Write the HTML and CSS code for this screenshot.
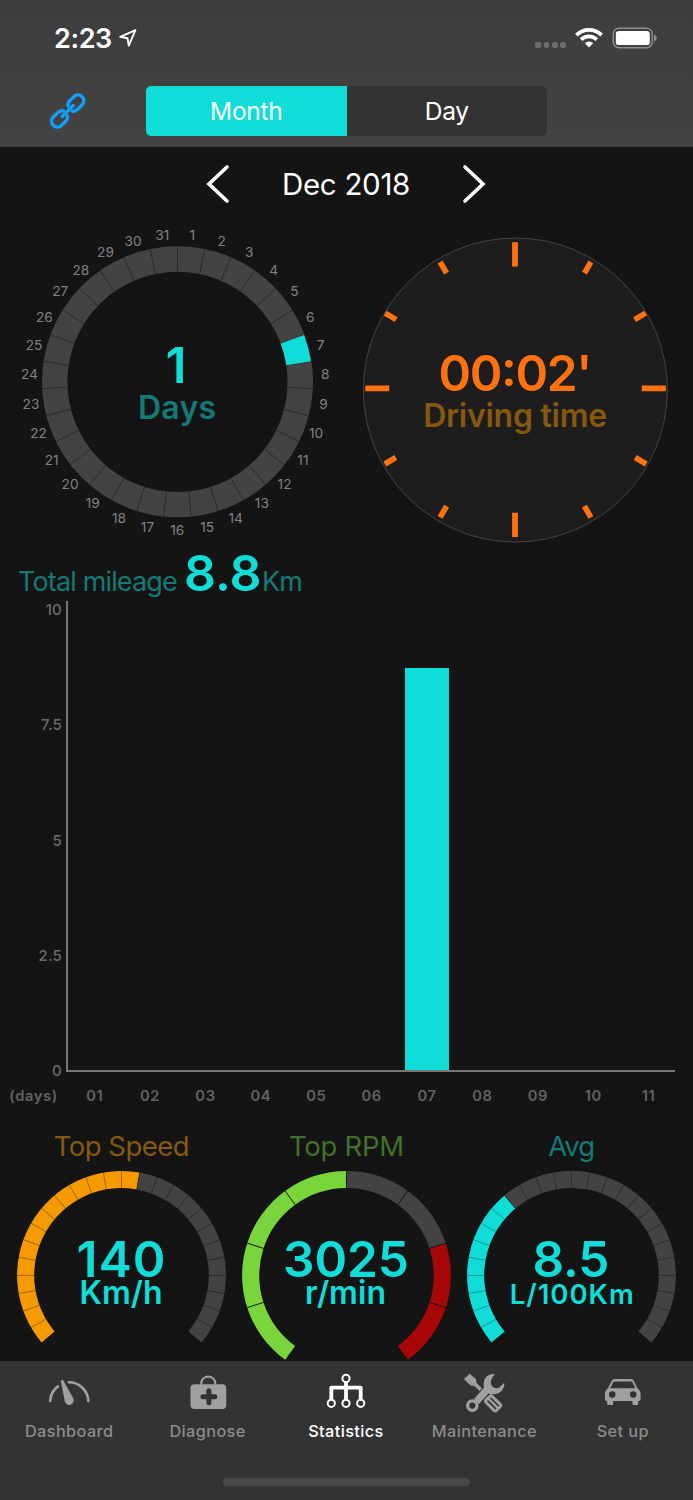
FILE: index.html
```html
<!DOCTYPE html>
<html lang="en">
<head>
  <meta charset="UTF-8">
  <meta name="viewport" content="width=device-width, initial-scale=1.0">
  <title>Statistics</title>
  <link rel="stylesheet" href="styles.css">
</head>
<body>

  <div class="header">
    <div class="status-bar">
      <div class="clock">
        <span class="time">2:23</span>
        <svg width="20" height="20" viewBox="0 0 20 20"><path d="M17.4 2.2 L2.2 8.8 L9.5 10.3 L10.8 17.6 Z" fill="none" stroke="#fff" stroke-width="1.9" stroke-linejoin="round"/></svg>
      </div>
      <div class="status-icons">
        <div class="signal"><i></i><i></i><i></i><i></i></div>
        <svg class="wifi" width="28" height="20" viewBox="0 0 28 20" fill="none" stroke="#fff">
          <path d="M1.4 7.1 A17.8 17.8 0 0 1 26.6 7.1" stroke-width="3.7"/>
          <path d="M6.1 11.6 A11.2 11.2 0 0 1 21.9 11.6" stroke-width="3.7"/>
          <path d="M14 19.4 L9.8 15.3 A6 6 0 0 1 18.2 15.3 Z" fill="#fff" stroke="none"/>
        </svg>
        <svg width="46" height="22" viewBox="0 0 46 22">
          <rect x="1.3" y="1.3" width="39" height="19.4" rx="5.6" fill="none" stroke="#8c8c8c" stroke-width="1.5"/>
          <rect x="3.8" y="3.9" width="34" height="14.2" rx="3.2" fill="#fff"/>
          <path d="M42 7.6 Q44.8 8.6 44.8 11 T42 14.4 Z" fill="#8c8c8c"/>
        </svg>
      </div>
    </div>
    <div class="toolbar">
      <svg class="link-icon" width="36" height="36" viewBox="0 0 36 36" fill="none" stroke="#13a0f7" stroke-width="3.4" stroke-linecap="round">
        <path id="chain" d="M18 13 Q17.4 10.2 19.8 7.8 L24 3.6 A5.8 5.8 0 0 1 32.2 11.8 L27.4 16.6 Q25 18.8 22.2 18.1"/>
        <use href="#chain" transform="rotate(180 17.7 18)"/>
        <path d="M12.2 23.5 L23.2 12.5"/>
      </svg>
      <div class="segment">
        <div class="segment-btn active">Month</div>
        <div class="segment-btn">Day</div>
      </div>
    </div>
  </div>

  <div class="month-nav">
    <svg width="24" height="40" viewBox="0 0 24 40"><path d="M21 3 L3 20 L21 37"/></svg>
    <span class="month-name">Dec 2018</span>
    <svg width="24" height="40" viewBox="0 0 24 40"><path d="M3 3 L21 20 L3 37"/></svg>
  </div>

  <div class="dials">
    <svg id="daysRing" width="355" height="329" viewBox="0 0 355 329">
      <g id="daysSegments"></g>
      <text class="big cyan" x="176" y="162">1</text>
      <text class="medium teal" x="177" y="197.7" textLength="78">Days</text>
    </svg>
    <svg width="338" height="329" viewBox="0 0 338 329">
      <circle cx="160.4" cy="169" r="152" fill="#1d1d1d" stroke="#444" stroke-width="1"/>
      <g stroke="#ff720f">
        <path d="M160 21.3 V45.5 M160 291.7 V316 M10.3 167.4 H34.2 M286.8 167.4 H310.8" stroke-width="5.8"/>
        <path d="M235.9 41 L229.4 52.2 M290.6 92.2 L279.6 98.7 M291.2 243 L280.2 236.5 M235.9 296.3 L229.4 285.1 M85.1 296.3 L91.6 285.1 M29.8 243 L40.8 236.5 M30.2 92.2 L41.2 98.7 M85.1 41 L91.6 52.2" stroke-width="5.6"/>
      </g>
      <text class="big orange" x="160.4" y="170" textLength="154">00:02'</text>
      <text class="medium brown" x="160.2" y="205.5" textLength="184">Driving time</text>
    </svg>
  </div>

  <div class="mileage">
    <span class="mileage-label">Total mileage</span>
    <span class="mileage-value">8.8</span>
    <span class="mileage-unit">Km</span>
  </div>

  <div class="chart">
    <div class="y-axis">
      <span>10</span><span>7.5</span><span>5</span><span>2.5</span><span>0</span>
    </div>
    <div class="plot">
      <div class="bar"></div>
    </div>
  </div>
  <div class="x-axis">
    <span class="x-unit">(days)</span>
    <span>01</span><span>02</span><span>03</span><span>04</span><span>05</span><span>06</span><span>07</span><span>08</span><span>09</span><span>10</span><span>11</span>
  </div>

  <div class="gauges">
    <svg id="speedGauge" width="225.4" height="241" viewBox="0 0 225.4 241">
      <g></g>
      <text class="title brown" x="112.7" y="36" textLength="136">Top Speed</text>
      <text class="big cyan" x="112" y="156.7" textLength="89">140</text>
      <text class="medium cyan" x="112" y="184" textLength="83">Km/h</text>
    </svg>
    <svg id="rpmGauge" width="225.4" height="241" viewBox="0 0 225.4 241">
      <g></g>
      <text class="title green" x="112.5" y="36" textLength="115">Top RPM</text>
      <text class="big cyan" x="112" y="156.7" textLength="126">3025</text>
      <text class="medium cyan" x="111.6" y="184" textLength="81">r/min</text>
    </svg>
    <svg id="avgGauge" width="225.4" height="241" viewBox="0 0 225.4 241">
      <g></g>
      <text class="title teal" x="112.7" y="36" textLength="47">Avg</text>
      <text class="big cyan" x="112" y="156.7" textLength="77">8.5</text>
      <text class="small cyan" x="112.7" y="183.7" textLength="124">L/100Km</text>
    </svg>
  </div>

  <div class="tab-bar">
    <div class="tabs">
      <div class="tab">
        <svg width="48" height="46" viewBox="0 0 48 46">
          <path d="M5.2 31 A19 19 0 0 1 13 16.4 M23.9 12.3 A19.4 19.4 0 0 1 43.3 31" fill="none" stroke="#a0a0a0" stroke-width="2.6" stroke-linecap="round"/>
          <path d="M15.9 11.2 Q16.2 9.2 18.2 10.3 L28.2 28.3 A4.5 4.5 0 1 1 19.8 31.2 Z" fill="#a0a0a0"/>
        </svg>
        <span>Dashboard</span>
      </div>
      <div class="tab">
        <svg width="48" height="46" viewBox="0 0 48 46">
          <path d="M17.3 14.5 V12.5 A7 6.6 0 0 1 31.2 12.5 V14.5" fill="none" stroke="#a0a0a0" stroke-width="2.2"/>
          <rect x="6.5" y="14.3" width="35.8" height="24.6" rx="4" fill="#a0a0a0"/>
          <path d="M18.9 26.8 H30.9 M24.9 20.8 V32.8" stroke="#333" stroke-width="5" stroke-linecap="round"/>
        </svg>
        <span>Diagnose</span>
      </div>
      <div class="tab active">
        <svg width="48" height="46" viewBox="0 0 48 46" fill="none" stroke="#fff">
          <path d="M24 12 V29.6 M9.3 29.6 V17.7 H38.7 V29.6" stroke-width="3.8" stroke-linejoin="round"/>
          <g stroke-width="2" fill="#333">
            <circle cx="24" cy="8.4" r="3.6"/>
            <circle cx="9.3" cy="33.3" r="3.6"/>
            <circle cx="24" cy="33.3" r="3.6"/>
            <circle cx="38.7" cy="33.3" r="3.6"/>
          </g>
        </svg>
        <span>Statistics</span>
      </div>
      <div class="tab">
        <svg width="48" height="46" viewBox="0 0 48 46" fill="#a0a0a0">
          <path d="M3.9 9 L9.6 3.7 L16 9 L16.6 13 L21.9 18.3 L19.6 21 L14.3 16 L10.3 15.3 Z"/>
          <path d="M35 4 C27 3.5 22.5 8.5 24 17.5 L14 29 L19 34 L28.5 23.5 C37 26.5 45 21 44.3 12.8 L39.5 17.3 C36 19.5 30.8 17.5 30.8 12 Q31 8.5 35 4 Z"/>
          <circle cx="12.3" cy="35.6" r="4.7" fill="#333" stroke="#a0a0a0" stroke-width="3.2"/>
          <g transform="translate(33 33.2) rotate(45)">
            <rect x="-8.6" y="-5.8" width="17.6" height="11.6" rx="3.4"/>
            <path d="M-5 -2 H5.6 M-5 2 H5.6" stroke="#333" stroke-width="1.6" stroke-linecap="round"/>
          </g>
        </svg>
        <span>Maintenance</span>
      </div>
      <div class="tab">
        <svg width="48" height="46" viewBox="0 0 48 46" fill="#a0a0a0">
          <path d="M12.8 10.5 Q13.8 9 15.5 9 H32 Q33.8 9 34.7 10.5 L38.5 18.3 Q41.6 20.5 41.6 24.5 V29.5 Q41.6 31 39.2 31 V34 Q39.2 35 38.2 35 H34.5 Q33.5 35 33.5 34 V31 H14.2 V34 Q14.2 35 13.2 35 H9.2 Q8.2 35 8.2 34 V31 Q5.9 31 5.9 29.5 V24.5 Q5.9 20.5 9 18.3 Z"/>
          <path d="M11.2 18.2 L14.7 11.6 H32.9 L36.4 18.2 Z" fill="#333"/>
          <circle cx="13.2" cy="24.6" r="3.3" fill="#333"/>
          <circle cx="34.2" cy="24.6" r="3.3" fill="#333"/>
        </svg>
        <span>Set up</span>
      </div>
    </div>
    <div class="home-indicator"></div>
  </div>

  <script src="script.js"></script>
</body>
</html>
```
FILE: styles.css
```css
body {
  margin: 0;
  padding: 0;
  width: 693px;
  height: 1500px;
  overflow: hidden;
  background: #141414;
  color: white;
  font-family: Inter, "Liberation Sans", sans-serif;
}

svg {
  display: block;
  flex: none;
}

/* header */
.header {
  height: 147px;
  background: linear-gradient(#3d3d3d, #434343);
}

.status-bar {
  height: 76px;
  box-sizing: border-box;
  padding: 0 35px 0 54px;
  display: flex;
  justify-content: space-between;
  align-items: center;
}

.clock {
  display: flex;
  align-items: center;
  gap: 5.5px;
}

.time {
  width: 58px;
  font-size: 27px;
  font-weight: 600;
  white-space: nowrap;
  letter-spacing: -0.4px;
}

.status-icons {
  display: flex;
  align-items: center;
}

.signal {
  display: flex;
  gap: 2.8px;
  margin: 13px 9px 0 0;
}

.signal i {
  width: 5.6px;
  height: 6px;
  border-radius: 2px;
  background: #6c6c6c;
}

.wifi {
  margin-right: 9px;
}

.toolbar {
  display: flex;
  align-items: center;
  padding: 9.5px 0 0 49.5px;
}

.segment {
  display: flex;
  width: 401px;
  height: 50px;
  margin-left: 60.5px;
  border-radius: 5px;
  overflow: hidden;
  background: #333;
}

.segment-btn {
  width: 50%;
  line-height: 50px;
  text-align: center;
  font-size: 24.5px;
  letter-spacing: -0.3px;
}

.segment-btn.active {
  background: #11ddd8;
}

/* month picker */
.month-nav {
  height: 74px;
  width: 692px;
  display: flex;
  justify-content: center;
  align-items: center;
}

.month-nav path {
  fill: none;
  stroke: #fff;
  stroke-width: 3.6;
  stroke-linecap: round;
}

.month-name {
  width: 232px;
  margin-top: -1px;
  text-align: center;
  font-size: 29.5px;
  letter-spacing: -0.3px;
}

/* rings */
.dials {
  display: flex;
  height: 329px;
}

text {
  text-anchor: middle;
}

.day-number {
  font-size: 13.7px;
  fill: #828282;
}

.big {
  font-size: 49.5px;
  font-weight: 600;
}

.medium {
  font-size: 32px;
  font-weight: 600;
}

.small {
  font-size: 27.5px;
  font-weight: 600;
}

.title {
  font-size: 27.5px;
}

.cyan { fill: #11ddd8; }
.teal { fill: #137a76; }
.orange { fill: #ff720f; }
.brown { fill: #87590f; }
.green { fill: #43702a; }

/* mileage */
.mileage {
  height: 51px;
  padding-left: 18px;
  display: flex;
  align-items: baseline;
  color: #137a76;
  font-size: 27px;
  line-height: 46px;
}

.mileage-label {
  width: 166px;
  letter-spacing: -0.85px;
  white-space: nowrap;
}

.mileage-value {
  width: 78px;
  color: #11ddd8;
  font-size: 50px;
  font-weight: 600;
}

.mileage-unit {
  letter-spacing: -0.8px;
}

/* bar chart */
.chart {
  display: flex;
  height: 471px;
  color: #6a6a6a;
  font-size: 15px;
  font-weight: 500;
}

.y-axis {
  width: 62px;
  height: 479px;
  margin-right: 3.5px;
  display: flex;
  flex-direction: column;
  justify-content: space-between;
  text-align: right;
  line-height: 18px;
  letter-spacing: 0.2px;
}

.plot {
  width: 607px;
  border-left: 2px solid #777;
  border-bottom: 2px solid #777;
  display: flex;
  align-items: flex-end;
}

.bar {
  width: 44px;
  height: 402px;
  margin-left: 337.5px;
  background: #11ddd8;
}

.x-axis {
  height: 48px;
  display: flex;
  color: #626262;
  font-size: 14.7px;
  font-weight: 600;
  letter-spacing: 0.6px;
  line-height: 48px;
}

.x-axis span {
  width: 55.4px;
  text-align: center;
}

.x-axis .x-unit {
  width: 67px;
}

/* gauges */
.gauges {
  display: flex;
  height: 241px;
  padding-left: 8.6px;
}

/* bottom tabs */
.tab-bar {
  height: 139px;
  background: #333;
}

.tabs {
  display: flex;
  height: 117px;
}

.tab {
  width: 138.4px;
  padding-top: 9px;
  box-sizing: border-box;
  display: flex;
  flex-direction: column;
  align-items: center;
  color: #8b8b8b;
  font-size: 16.3px;
  font-weight: 500;
  letter-spacing: 0.4px;
}

.tab span {
  margin-top: 5px;
  line-height: 20px;
}

.tab.active {
  color: #fff;
}

.home-indicator {
  width: 247px;
  height: 8px;
  margin: 0 auto;
  border-radius: 4px;
  background: #484848;
}
```
FILE: script.js
```js
const NS = 'http://www.w3.org/2000/svg';

function add(parent, tag, attrs) {
  const el = document.createElementNS(NS, tag);
  for (const key in attrs) el.setAttribute(key, attrs[key]);
  parent.appendChild(el);
  return el;
}

// angle in degrees, 0 is up, clockwise
function point(cx, cy, r, angle) {
  const a = angle * Math.PI / 180;
  return (cx + r * Math.sin(a)).toFixed(2) + ' ' + (cy - r * Math.cos(a)).toFixed(2);
}

function band(parent, cx, cy, outer, inner, from, to, color) {
  const large = to - from > 180 ? 1 : 0;
  add(parent, 'path', {
    d: `M${point(cx, cy, outer, from)} A${outer} ${outer} 0 ${large} 1 ${point(cx, cy, outer, to)} ` +
       `L${point(cx, cy, inner, to)} A${inner} ${inner} 0 ${large} 0 ${point(cx, cy, inner, from)} Z`,
    fill: color
  });
}

function divider(parent, cx, cy, outer, inner, angle, color) {
  add(parent, 'path', {
    d: `M${point(cx, cy, outer, angle)} L${point(cx, cy, inner, angle)}`,
    stroke: color,
    'stroke-width': 1
  });
}

function drawDays() {
  const g = document.getElementById('daysSegments');
  const step = 360 / 31;
  add(g, 'circle', { cx: 177.5, cy: 160.8, r: 122.8, fill: 'none', stroke: '#434343', 'stroke-width': 25.4 });
  for (let i = 0; i < 31; i++) {
    divider(g, 177.5, 160.8, 135.5, 110.1, i * step, '#2b2b2b');
  }
  // driven on the 7th
  band(g, 177.5, 160.8, 135, 110.1, 6 * step, 7 * step, '#11ddd8');
  for (let i = 0; i < 31; i++) {
    const [x, y] = point(177.3, 161, 148, (i + 0.5) * step).split(' ');
    add(g, 'text', { class: 'day-number', x: x, y: Number(y) + 4.8 }).textContent = i + 1;
  }
}

function drawGauge(id, parts, start, step, line) {
  const g = document.querySelector('#' + id + ' g');
  parts.forEach(p => band(g, 112.5, 155.4, 104.4, 87.3, p[0], p[1], p[2]));
  for (let a = start + step; a < -start; a += step) {
    divider(g, 112.5, 155.4, 104.4, 87.3, a, line);
  }
}

drawDays();
drawGauge('speedGauge', [[-130, 10, '#f59a00'], [10, 130, '#434343']], -130, 10, 'rgba(0,0,0,0.35)');
drawGauge('rpmGauge', [[-144, 0, '#7ad53c'], [0, 72, '#434343'], [72, 144, '#a80707']], -144, 36, '#141414');
drawGauge('avgGauge', [[-130, -40, '#11ddd8'], [-40, 130, '#434343']], -130, 10, 'rgba(0,0,0,0.3)');
```
